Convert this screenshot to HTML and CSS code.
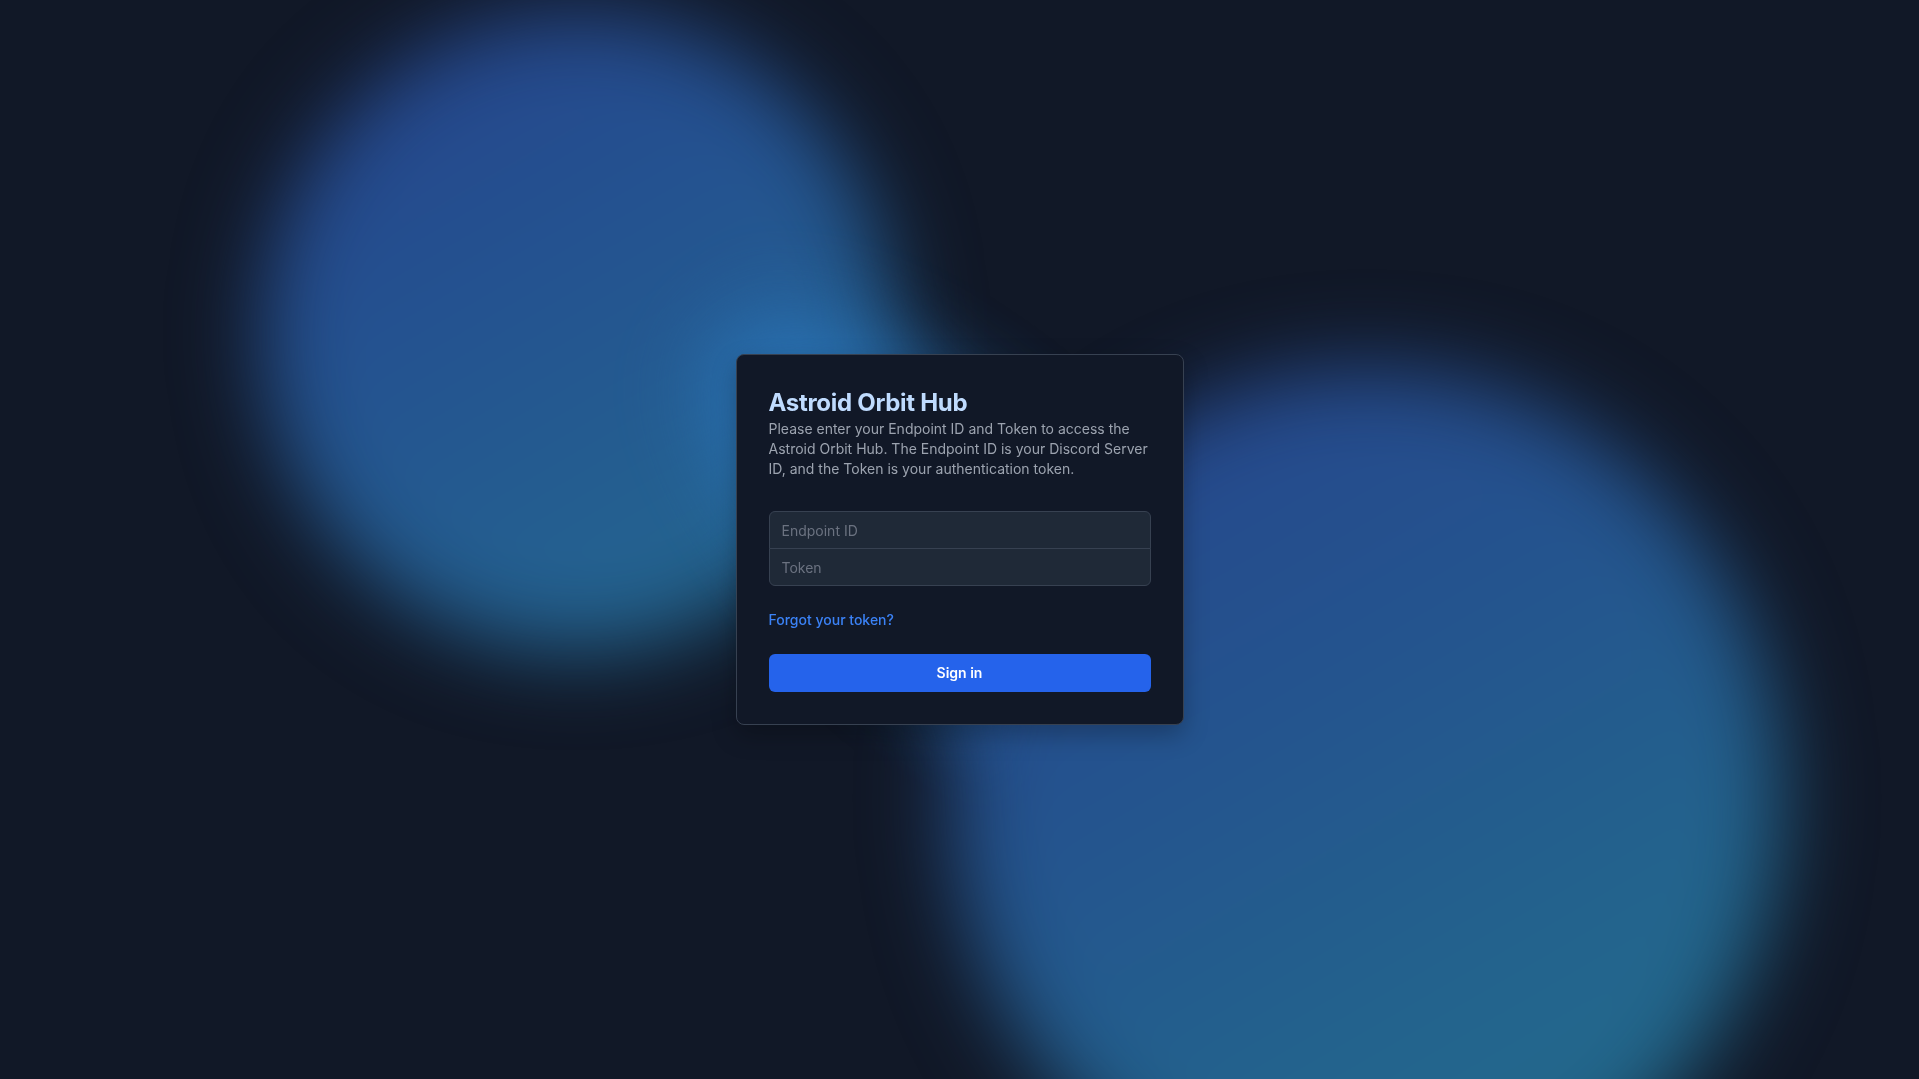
FILE: index.html
```html
<!DOCTYPE html>
<html lang="en">
<head>
<meta charset="utf-8">
<title>Astroid Orbit Hub</title>
<link rel="stylesheet" href="styles.css">
</head>
<body>
<div class="backdrop" aria-hidden="true">
  <div class="blob blob-a"></div>
  <div class="blob blob-c"></div>
  <div class="blob blob-b"></div>
</div>
<main class="page">
  <section class="card">
    <h1 class="title">Astroid Orbit Hub</h1>
    <p class="intro">Please enter your Endpoint ID and Token to access the Astroid Orbit Hub. The Endpoint ID is your Discord Server ID, and the Token is your authentication token.</p>
    <form class="form">
      <div class="fields">
        <input class="field field-top" type="text" placeholder="Endpoint ID">
        <input class="field field-bottom" type="password" placeholder="Token">
      </div>
      <a class="forgot" href="#">Forgot your token?</a>
      <button class="submit" type="button">Sign in</button>
    </form>
  </section>
</main>
</body>
</html>
```
FILE: styles.css
```css
* { box-sizing: border-box; }
html, body { margin: 0; height: 100%; }
body {
  background: #111827;
  font-family: Inter, "Noto Sans", "Liberation Sans", sans-serif;
  overflow: hidden;
}
.backdrop {
  position: fixed;
  inset: 0;
  overflow: hidden;
  z-index: 0;
}
.blob {
  position: absolute;
  border-radius: 50%;
  filter: blur(42px);
}
.blob-a {
  left: 262px;
  top: 12px;
  width: 630px;
  height: 640px;
  background: linear-gradient(150deg, #26418a 0%, #245290 40%, #245f90 70%, #236b8e 100%);
}
.blob-b {
  left: 952px;
  top: 368px;
  width: 830px;
  height: 860px;
  background: linear-gradient(150deg, #27438c 0%, #24548e 40%, #23648d 70%, #236e8b 100%);
}
.blob-c {
  left: 640px;
  top: 420px;
  width: 640px;
  height: 260px;
  transform: rotate(42deg);
  background: #2a74b8;
  opacity: 0.85;
}
.page {
  position: relative;
  z-index: 1;
  min-height: 100%;
  display: flex;
  align-items: center;
  justify-content: center;
}
.card {
  width: 448px;
  background: #111827;
  border: 1px solid #374151;
  border-radius: 8px;
  padding: 32px;
  box-shadow: 0 10px 25px rgba(0, 0, 0, 0.25);
}
.title {
  margin: 0;
  font-size: 24px;
  line-height: 32px;
  font-weight: 700;
  letter-spacing: -0.3px;
  color: #bfdbfe;
}
.intro {
  margin: 0;
  font-size: 14px;
  line-height: 20px;
  color: #9ca3af;
}
.form {
  margin-top: 32px;
  display: flex;
  flex-direction: column;
}
.fields {
  display: flex;
  flex-direction: column;
}
.field {
  display: block;
  width: 100%;
  height: 38px;
  padding: 8px 12px;
  font-family: inherit;
  font-size: 14px;
  line-height: 20px;
  color: #e5e7eb;
  background: #1f2937;
  border: 1px solid #374151;
  outline: none;
}
.field::placeholder { color: #6b7280; }
.field-top { border-radius: 6px 6px 0 0; }
.field-bottom { border-radius: 0 0 6px 6px; margin-top: -1px; }
.forgot {
  align-self: flex-start;
  margin-top: 24px;
  font-size: 14px;
  line-height: 20px;
  font-weight: 500;
  color: #3b82f6;
  text-decoration: none;
}
.submit {
  margin-top: 24px;
  height: 38px;
  width: 100%;
  border: 0;
  border-radius: 6px;
  background: #2563eb;
  color: #ffffff;
  font-family: inherit;
  font-size: 14px;
  line-height: 20px;
  font-weight: 600;
}
```
